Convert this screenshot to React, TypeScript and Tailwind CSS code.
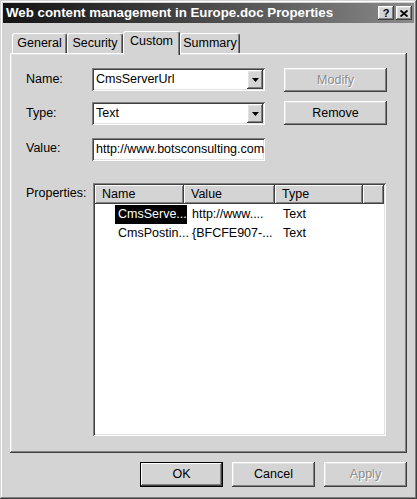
import React from "react";

const raised =
  "shadow-[inset_-1px_-1px_#404040,inset_1px_1px_#ffffff,inset_-2px_-2px_#808080,inset_2px_2px_#e2e2e2]";
const sunken =
  "shadow-[inset_1px_1px_#808080,inset_-1px_-1px_#ffffff,inset_2px_2px_#404040,inset_-2px_-2px_#e2e2e2]";

const Arrow = () => (
  <svg width="7" height="4" viewBox="0 0 7 4">
    <path d="M0 0h7L3.5 4z" fill="#000" />
  </svg>
);

const Combo = ({ value }: { value: string }) => (
  <div className={`${sunken} bg-white w-[173px] h-[23px] p-[2px] flex`}>
    <div className="flex-1 pl-[2px] flex items-center">{value}</div>
    <div className={`${raised} bg-[#d4d4d4] w-[16px] h-full flex items-center justify-center`}>
      <Arrow />
    </div>
  </div>
);

const Btn = ({
  label,
  disabled,
  isDefault,
  className = "",
}: {
  label: string;
  disabled?: boolean;
  isDefault?: boolean;
  className?: string;
}) => (
  <div
    className={`${
      isDefault
        ? "shadow-[inset_0_0_0_1px_#000000,inset_-2px_-2px_#404040,inset_2px_2px_#ffffff,inset_-3px_-3px_#808080]"
        : raised
    } bg-[#d4d4d4] flex items-center justify-center ${
      disabled ? "text-[#8c8c8c] [text-shadow:1px_1px_0_#ffffff]" : ""
    } ${className}`}
  >
    {label}
  </div>
);

const Tab = ({ label, width, selected }: { label: string; width: string; selected?: boolean }) => (
  <div
    className={`${width} ${
      selected ? "h-[24px] -mb-[2px] relative z-10 pb-[4px]" : "h-[20px]"
    } bg-[#d4d4d4] rounded-t-[3px] border-t border-l border-white border-r border-r-[#404040] shadow-[inset_-1px_0_#808080] flex items-center justify-center`}
  >
    {label}
  </div>
);

const HeaderCell = ({ label, width }: { label: string; width: string }) => (
  <div
    className={`${width} h-[19px] shadow-[inset_-1px_-1px_#404040,inset_1px_1px_#ffffff,inset_-2px_-2px_#808080] bg-[#d4d4d4] flex items-center pl-[7px]`}
  >
    {label}
  </div>
);

const rows = [
  { name: "CmsServe...", value: "http://www....", type: "Text", selected: true },
  { name: "CmsPostin...", value: "{BFCFE907-...", type: "Text" },
];

export default function App() {
  return (
    <div
      className="w-[417px] h-[499px] bg-[#d4d4d4] p-[3px] flex flex-col text-black text-[12.5px] leading-none shadow-[inset_-1px_-1px_#404040,inset_1px_1px_#d4d4d4,inset_-2px_-2px_#808080,inset_2px_2px_#ffffff]"
      style={{ fontFamily: "'Liberation Sans', Arial, sans-serif" }}
    >
      {/* title bar */}
      <div className="h-[20px] flex items-center bg-gradient-to-r from-[#141414] to-[#8a8a8a] pl-[3px] pr-[2px]">
        <div className="flex-1 text-white font-bold text-[13.3px]">
          Web content management in Europe.doc Properties
        </div>
        <div className={`${raised} bg-[#d4d4d4] w-[16px] h-[14px] flex items-center justify-center font-bold text-[11px]`}>
          ?
        </div>
        <div className={`${raised} bg-[#d4d4d4] w-[16px] h-[14px] ml-[2px] flex items-center justify-center`}>
          <svg width="8" height="7" viewBox="0 0 8 7">
            <path d="M0.5 0.5L7.5 6.5M7.5 0.5L0.5 6.5" stroke="#000" strokeWidth="1.8" />
          </svg>
        </div>
      </div>

      {/* tabs */}
      <div className="mt-[8px] px-[7px]">
        <div className="h-[22px] flex items-end pl-[2px]">
          <Tab label="General" width="w-[55px]" />
          <Tab label="Security" width="w-[56px]" />
          <Tab label="Custom" width="w-[57px]" selected />
          <Tab label="Summary" width="w-[60px]" />
        </div>

        <div className={`${raised} h-[400px] pl-[16px] pt-[15px]`}>
          <div className="flex items-start h-[24px]">
            <div className="w-[66px] pt-[5px]">Name:</div>
            <Combo value="CmsServerUrl" />
            <Btn label="Modify" disabled className="w-[103px] h-[24px] ml-[19px]" />
          </div>
          <div className="flex items-start h-[24px] mt-[9px]">
            <div className="w-[66px] pt-[6px]">Type:</div>
            <div className="pt-[1px]">
              <Combo value="Text" />
            </div>
            <Btn label="Remove" className="w-[103px] h-[24px] ml-[19px]" />
          </div>
          <div className="flex items-start mt-[13px]">
            <div className="w-[66px] pt-[4px]">Value:</div>
            <div className={`${sunken} bg-white w-[173px] h-[23px] flex items-center pl-[4px] overflow-hidden whitespace-nowrap`}>
              http://www.botsconsulting.com
            </div>
          </div>
          <div className="flex items-start mt-[22px]">
            <div className="w-[67px] pt-[4px]">Properties:</div>
            <div className={`${sunken} bg-white w-[293px] h-[253px] p-[2px]`}>
              <div className="flex">
                <HeaderCell label="Name" width="w-[89px]" />
                <HeaderCell label="Value" width="w-[91px]" />
                <HeaderCell label="Type" width="w-[88px]" />
                <div className="flex-1 h-[19px] shadow-[inset_-1px_-1px_#404040,inset_1px_1px_#ffffff,inset_-2px_-2px_#808080] bg-[#d4d4d4]" />
              </div>
              <div className="pt-[1px]">
                {rows.map((r) => (
                  <div key={r.name} className="flex h-[19px] items-center">
                    <div className="w-[89px] pl-[20px] h-full flex items-center">
                      <div
                        className={`h-full flex-1 flex items-center pl-[3px] ${
                          r.selected ? "bg-black text-white" : ""
                        }`}
                      >
                        {r.name}
                      </div>
                    </div>
                    <div className="w-[91px] pl-[8px]">{r.value}</div>
                    <div className="w-[88px] pl-[8px]">{r.type}</div>
                  </div>
                ))}
              </div>
            </div>
          </div>
        </div>
      </div>

      {/* bottom buttons */}
      <div className="mt-[9px] flex justify-end pr-[7px] gap-[9px]">
        <Btn label="OK" isDefault className="w-[83px] h-[25px]" />
        <Btn label="Cancel" className="w-[83px] h-[25px]" />
        <Btn label="Apply" disabled className="w-[83px] h-[25px]" />
      </div>
    </div>
  );
}
